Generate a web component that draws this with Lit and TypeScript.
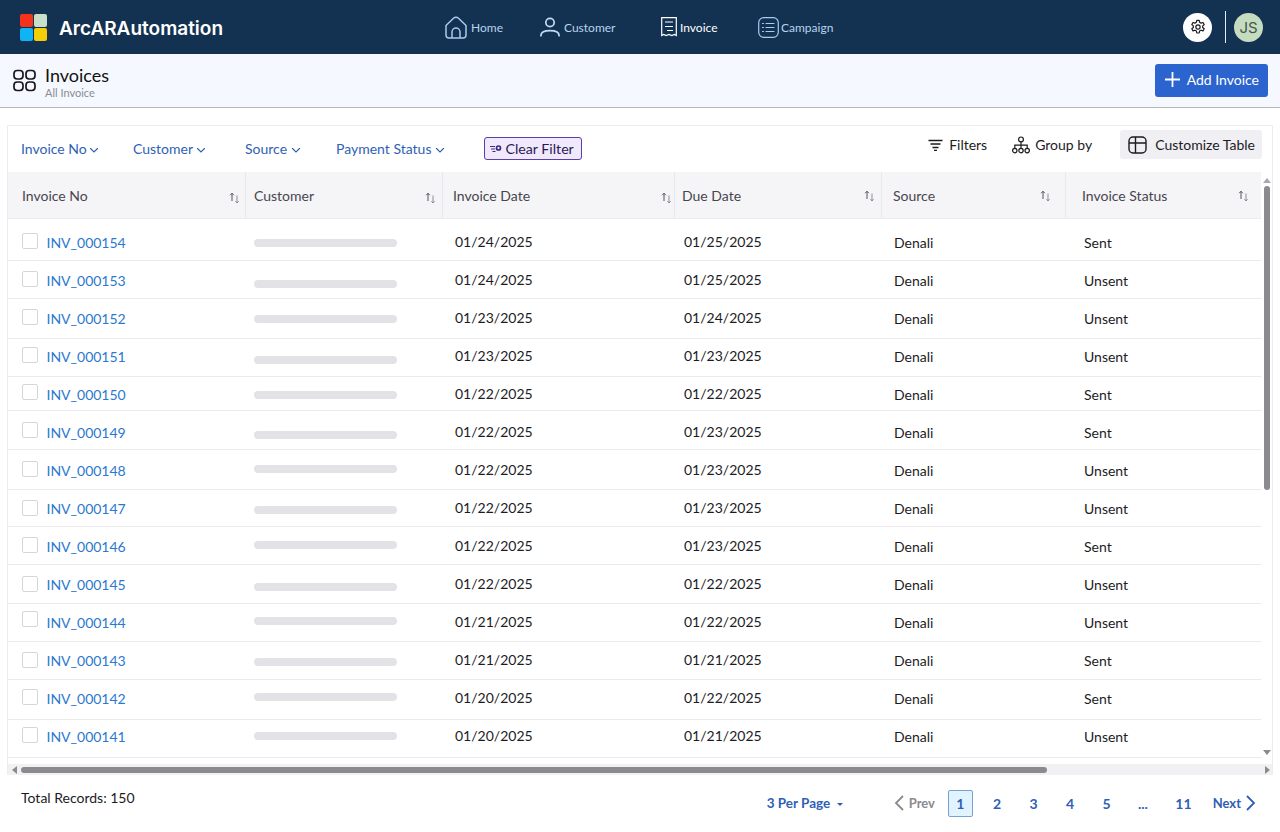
import { LitElement, css, html, svg } from 'lit';
import { customElement } from 'lit/decorators.js';

// invoice, invoice date, due date, status, customer bar offset, checkbox offset, y of the row's bottom rule
const rows = [
  ['INV_000154', '01/24/2025', '01/25/2025', 'Sent', 1, -1, 260],
  ['INV_000153', '01/24/2025', '01/25/2025', 'Unsent', 4, -1, 298],
  ['INV_000152', '01/23/2025', '01/24/2025', 'Unsent', 1, -1, 338],
  ['INV_000151', '01/23/2025', '01/23/2025', 'Unsent', 4, -1, 376],
  ['INV_000150', '01/22/2025', '01/22/2025', 'Sent', 1, -2, 410],
  ['INV_000149', '01/22/2025', '01/23/2025', 'Sent', 3, -2, 449],
  ['INV_000148', '01/22/2025', '01/23/2025', 'Unsent', -1, -1, 489],
  ['INV_000147', '01/22/2025', '01/23/2025', 'Unsent', 2, 0, 526],
  ['INV_000146', '01/22/2025', '01/23/2025', 'Sent', -1, -1, 564],
  ['INV_000145', '01/22/2025', '01/22/2025', 'Unsent', 3, 0, 603],
  ['INV_000144', '01/21/2025', '01/22/2025', 'Unsent', -1, -3, 641],
  ['INV_000143', '01/21/2025', '01/21/2025', 'Sent', 2, 0, 679],
  ['INV_000142', '01/20/2025', '01/22/2025', 'Sent', -1, -1, 719],
  ['INV_000141', '01/20/2025', '01/21/2025', 'Unsent', 0, -1, 757],
] as const;

const columns = ['Invoice No', 'Customer', 'Invoice Date', 'Due Date', 'Source', 'Invoice Status'];

const chevron = svg`<path d="M1.5 3.5 5 7l3.5-3.5" fill="none" stroke="currentColor" stroke-width="1.1" stroke-linecap="round"/>`;

@customElement('app-root')
export class AppRoot extends LitElement {
  static styles = css`
    :host {
      display: block;
      width: 1280px;
      height: 832px;
      overflow: hidden;
      background: #fff;
      font-family: Lato, 'Liberation Sans', sans-serif;
      color: #1c1b1f;
    }
    svg { display: block; flex: none; }

    .topbar {
      height: 54px;
      background: #133251;
      display: grid;
      grid-template-columns: 444px 1fr auto;
      align-items: center;
      padding-right: 17px;
    }
    .brand {
      display: flex;
      align-items: center;
      gap: 12px;
      padding-left: 20px;
      color: #fff;
      font-family: Inter, sans-serif;
      font-size: 19px;
      font-weight: 600;
    }
    .brand span { padding-top: 2px; }
    .logo { display: grid; grid-template-columns: 13px 13px; gap: 1px; }
    .logo i { height: 13px; border-radius: 2px; }
    .nav { display: flex; align-items: center; font-size: 12px; color: #b9d3ee; }
    .nav a { display: flex; align-items: center; }
    .nav a.home { width: 96px; gap: 3px; }
    .nav a.customer { width: 121px; gap: 4px; }
    .nav a.invoice { width: 97px; gap: 3px; color: #fff; }
    .nav a.campaign { gap: 2px; }
    .account { display: flex; align-items: center; }
    .gear {
      width: 29px; height: 29px; border-radius: 50%; background: #fff;
      display: flex; align-items: center; justify-content: center; color: #1c1b1f;
    }
    .divider { width: 1px; height: 32px; background: #e6edf5; margin: 0 8px 0 13px; }
    .avatar {
      width: 29px; height: 29px; border-radius: 50%; background: #c5dcc0;
      display: flex; align-items: center; justify-content: center;
      font-family: Inter, sans-serif; font-size: 15px; color: #44574a;
    }

    .pagehead {
      height: 54px;
      box-sizing: border-box;
      background: #f5f9ff;
      border-bottom: 1px solid #b5b7ba;
      display: flex;
      align-items: center;
      padding: 0 12px 0 13px;
      gap: 9px;
    }
    .titles { flex: 1; padding-top: 1px; }
    .titles h1 { margin: 0; font-size: 18px; font-weight: 400; line-height: 22px; color: #111; }
    .titles p { margin: 0; font-size: 11px; line-height: 13px; color: #8b8b90; }
    .add {
      display: flex; align-items: center; gap: 7px;
      height: 33px; box-sizing: border-box; padding: 0 9px 2px 10px;
      border: 0; border-radius: 3px; background: #2b63cf; color: #fff;
      font-family: inherit; font-size: 14px;
    }

    .card {
      margin: 17px 7px 0 7px;
      border: 1px solid #ededf0;
      border-bottom: 0;
    }
    .filters {
      height: 46px;
      display: flex;
      align-items: flex-start;
      background: #fff;
    }
    .filter {
      display: flex; align-items: center; gap: 2px;
      margin-top: 14px; font-size: 14px; line-height: 17px; color: #2f5fb5;
    }
    .filter svg { margin-top: 3px; }
    .clear {
      margin: 11px 0 0 39px;
      height: 23px; box-sizing: border-box;
      display: flex; align-items: center; gap: 3px;
      padding: 0 7px 0 5px;
      border: 1px solid #5c3ea8; border-radius: 3px;
      background: #efe9fb; color: #2a1a55; font-size: 14.2px;
    }
    .tools { margin-left: auto; display: flex; align-items: center; font-size: 14px; color: #1c1b1f; }
    .tool { display: flex; align-items: center; gap: 6px; margin-top: 4px; }
    .tool.group { margin-left: 25px; gap: 5px; }
    .tool.custom {
      margin-left: 28px; height: 29px; padding: 0 7px 0 8px; gap: 8px;
      background: #f0eff3; border-radius: 3px; margin-right: 10px;
    }

    .tablewrap { display: grid; grid-template-columns: 1fr 11px; height: 592px; }
    .table { overflow: hidden; }
    .row {
      display: grid;
      grid-template-columns: 238px 197px 232px 207px 184px 195px;
    }
    .head {
      height: 47px;
      background: #f5f4f7;
      border-bottom: 1px solid #eceaef;
      box-sizing: border-box;
      font-size: 14px;
      color: #47464f;
    }
    .head > div {
      display: flex;
      align-items: center;
      justify-content: space-between;
      border-right: 1px solid #e8e7ec;
      padding: 0 5px 0 8px;
    }
    .head > div:first-child { padding-left: 14px; }
    .head > div:nth-child(2) { padding-right: 6px; }
    .head > div:nth-child(3) { padding: 0 2px 0 10px; }
    .head > div:nth-child(4) { padding: 0 6px 0 7px; }
    .head > div:nth-child(5) { padding: 0 14px 0 11px; }
    .head > div:last-child { border-right: 0; padding: 0 12px 0 16px; }
    .head svg { margin-top: 6px; }
    .head > div:nth-child(n + 4) svg { margin-top: 2px; }
    .body { padding-top: 4px; }
    .item {
      box-sizing: border-box;
      border-bottom: 1px solid #ebe9eb;
      font-size: 14px;
      color: #1c1b1f;
    }
    .item > div {
      display: flex;
      align-items: center;
      height: 37px;
      box-sizing: border-box;
      margin-top: var(--shift);
      padding-top: 1px;
    }
    .item > div:first-child { padding-left: 14px; gap: 8.5px; }
    .check {
      width: 14px; height: 14px; border: 1px solid #d6d6da; border-radius: 2px; background: #fff;
    }
    .inv { color: #2b78cf; }
    .bar {
      width: 143px; height: 8px; border-radius: 4px; background: #e3e2e6; margin-left: 8px;
    }
    .item > div.date { padding: 0 0 1px 12px; }
    .item > div.due { padding: 0 0 1px 9px; }
    .item > div.src { padding-left: 12px; }
    .item > div.status { padding-left: 18px; }

    .vscroll { background: #fff; display: flex; flex-direction: column; align-items: center; padding-left: 1px; }
    .vtrack { flex: 1; width: 100%; display: flex; justify-content: center; }
    .vthumb { width: 6px; height: 304px; margin-top: 3px; border-radius: 3px; background: #8b8a8e; }
    .arrow-up { width: 0; height: 0; margin-top: 6px; border: 4.5px solid transparent; border-top: 0; border-bottom: 5px solid #a9a8ad; }
    .arrow-down { width: 0; height: 0; margin-bottom: 9px; border: 4.5px solid transparent; border-bottom: 0; border-top: 5px solid #8b8a8e; }
    .hscroll {
      height: 11px; background: #f1f0f3; display: flex; align-items: center;
      padding: 0 2px 0 4px; gap: 4px;
    }
    .hthumb { width: 1026px; height: 6px; border-radius: 3px; background: #8b8a8e; }
    .arrow-left { width: 0; height: 0; border: 4.5px solid transparent; border-left: 0; border-right: 5px solid #8b8a8e; }
    .arrow-right { width: 0; height: 0; margin-left: auto; border: 4.5px solid transparent; border-right: 0; border-left: 5px solid #8b8a8e; }

    .footer {
      display: flex; align-items: center; height: 56px;
      padding: 0 24px 0 21px; font-size: 14px;
    }
    .total { flex: 1; margin-bottom: 11px; color: #1c1b1f; }
    .perpage {
      display: flex; align-items: center; gap: 6px; width: 127px;
      color: #2f5fb5; font-weight: 700; font-size: 13.5px;
    }
    .caret { width: 0; height: 0; border: 3px solid transparent; border-bottom: 0; border-top: 3.5px solid #2f5fb5; margin-top: 2px; margin-left: 1px; }
    .pager { display: flex; align-items: center; color: #2f5fb5; font-weight: 700; font-size: 13px; }
    .prev { display: flex; align-items: center; gap: 5px; color: #8a8a8f; width: 54px; }
    .pager span.n { width: 36.5px; text-align: center; font-size: 14px; }
    .pager span.last { margin-left: 4px; }
    .current {
      width: 25px; height: 27px; box-sizing: border-box; margin-right: 6px;
      display: flex; align-items: center; justify-content: center; font-size: 14px;
      background: #e1f3ff; border: 1px solid #79a0d6; border-radius: 2px;
    }
    .next { display: flex; align-items: center; gap: 5px; margin-left: 11px; }
  `;

  private sortIcon() {
    return html`<svg width="11" height="12" viewBox="0 0 11 12" fill="none" stroke-width="1">
      <path d="M3 9V1.5M1.2 3.2 3 1.2l1.8 2" stroke="#55545c"/>
      <path d="M8 3.5V11M6.4 9.2 8 11l1.6-1.8" stroke="#8e8d95"/>
    </svg>`;
  }

  render() {
    return html`
      <header class="topbar">
        <div class="brand">
          <div class="logo">
            <i style="background:#f5331d"></i><i style="background:#c8dfca"></i>
            <i style="background:#0fb4f5"></i><i style="background:#f3cd07"></i>
          </div>
          <span>ArcARAutomation</span>
        </div>
        <nav class="nav">
          <a class="home">
            <svg width="24" height="24" viewBox="0 0 24 24" fill="none" stroke="#a9c9ee" stroke-width="1.5">
              <path d="M2 10.5 9.5 3.2a3.5 3.5 0 0 1 5 0L22 10.5V20a3 3 0 0 1-3 3H5a3 3 0 0 1-3-3Z" stroke-linejoin="round"/>
              <path d="M8 23v-6a4 4 0 0 1 8 0v6"/>
            </svg>
            Home
          </a>
          <a class="customer">
            <svg width="20" height="20" viewBox="0 0 22 22" fill="none" stroke="#c2dbf5" stroke-width="1.9" stroke-linecap="round">
              <circle cx="11" cy="6" r="4.6"/>
              <path d="M1 20.5c0-3.4 4-5.5 10-5.5s10 2.1 10 5.5"/>
            </svg>
            Customer
          </a>
          <a class="invoice">
            <svg width="16" height="20" viewBox="0 0 16 20" fill="none" stroke="#fff" stroke-width="1.2">
              <path d="M.7.7h14.6v17.8l-2-1-2.4 1-2.9-1-2.9 1-2.4-1-2 1Z"/>
              <path d="M4 5h8M4 9.5h8M6 13.5h6"/>
            </svg>
            Invoice
          </a>
          <a class="campaign">
            <svg width="21" height="21" viewBox="0 0 21 21" fill="none" stroke="#a9c9ee" stroke-width="1.2" stroke-linecap="round">
              <rect x=".7" y=".7" width="19.6" height="19.6" rx="5"/>
              <path d="M4.5 6.5h1M8 6.5h8M4.5 10.5h1M8 10.5h8M4.5 14.5h1M8 14.5h8"/>
            </svg>
            Campaign
          </a>
        </nav>
        <div class="account">
          <div class="gear">
            <svg width="16" height="16" viewBox="0 0 24 24" fill="none" stroke="currentColor" stroke-width="1.8" stroke-linejoin="round">
              <circle cx="12" cy="12" r="3.2"/>
              <path d="M10.2 2h3.6l.6 3 2.2 1.2 2.9-1 1.8 3.1-2.3 2v2.4l2.3 2-1.8 3.1-2.9-1-2.2 1.2-.6 3h-3.6l-.6-3-2.2-1.2-2.9 1-1.8-3.1 2.3-2v-2.4l-2.3-2 1.8-3.1 2.9 1 2.2-1.2Z"/>
            </svg>
          </div>
          <div class="divider"></div>
          <div class="avatar">JS</div>
        </div>
      </header>

      <section class="pagehead">
        <svg width="23" height="23" viewBox="0 0 23 23" fill="none" stroke="#17171a" stroke-width="1.7">
          <rect x="1" y="1.5" width="9" height="8.5" rx="3.2"/>
          <rect x="13" y="1.5" width="9" height="8.5" rx="3.2"/>
          <rect x="1" y="13" width="9" height="8.5" rx="3.2"/>
          <rect x="13" y="13" width="9" height="8.5" rx="3.2"/>
        </svg>
        <div class="titles">
          <h1>Invoices</h1>
          <p>All Invoice</p>
        </div>
        <button class="add">
          <svg width="15" height="15" viewBox="0 0 15 15" stroke="#fff" stroke-width="1.8"><path d="M7.5 0v15M0 7.5h15"/></svg>
          Add Invoice
        </button>
      </section>

      <section class="card">
        <div class="filters">
          <div class="filter" style="margin-left:13px;width:112px">Invoice No<svg width="10" height="10" viewBox="0 0 10 10">${chevron}</svg></div>
          <div class="filter" style="width:112px;gap:3px">Customer<svg width="10" height="10" viewBox="0 0 10 10">${chevron}</svg></div>
          <div class="filter" style="width:91px;gap:4px">Source<svg width="10" height="10" viewBox="0 0 10 10">${chevron}</svg></div>
          <div class="filter" style="gap:4px">Payment Status<svg width="10" height="10" viewBox="0 0 10 10">${chevron}</svg></div>
          <div class="clear">
            <svg width="12" height="10" viewBox="0 0 12 10" fill="none" stroke="#3c2a80" stroke-width="1">
              <path d="M0 2.5h5M1 5h4M2.5 7.5h3"/><circle cx="8.5" cy="4" r="2" stroke-width="1.7"/>
            </svg>
            Clear Filter
          </div>
          <div class="tools">
            <div class="tool">
              <svg width="15" height="12" viewBox="0 0 15 12" stroke="#1c1b1f" stroke-width="1.4"><path d="M.5 1.5h14M2.5 5h10M4.5 8.5h6M6 11.5h3"/></svg>
              Filters
            </div>
            <div class="tool group">
              <svg width="18" height="18" viewBox="0 0 18 18" fill="none" stroke="#1c1b1f" stroke-width="1.2">
                <circle cx="9" cy="3.4" r="2.4"/><circle cx="2.8" cy="14.6" r="2.2"/><circle cx="9" cy="14.6" r="2.2"/><circle cx="15.2" cy="14.6" r="2.2"/>
                <path d="M9 5.8v6.6M2.8 12.4V9.2h12.4v3.2"/>
              </svg>
              Group by
            </div>
            <div class="tool custom">
              <svg width="19" height="18" viewBox="0 0 19 18" fill="none" stroke="#1c1b1f" stroke-width="1.4">
                <rect x="1" y="1" width="17" height="16" rx="4"/><path d="M1 7h17M7.5 1v16"/>
              </svg>
              Customize Table
            </div>
          </div>
        </div>

        <div class="tablewrap">
          <div class="table">
            <div class="row head">
              ${columns.map((c) => html`<div>${c}${this.sortIcon()}</div>`)}
            </div>
            <div class="body">
              ${rows.map((r, i) => {
                const prev = i ? rows[i - 1][6] : 222;
                const shift = 223 + 38 * i - (prev + 1);
                return html`
                  <div class="row item" style="height:${r[6] - prev}px;--shift:${shift}px">
                    <div>
                      <span class="check" style="transform:translateY(${r[5]}px)"></span>
                      <span class="inv">${r[0]}</span>
                    </div>
                    <div><span class="bar" style="transform:translateY(${r[4]}px)"></span></div>
                    <div class="date">${r[1]}</div>
                    <div class="due">${r[2]}</div>
                    <div class="src">Denali</div>
                    <div class="status">${r[3]}</div>
                  </div>
                `;
              })}
            </div>
          </div>
          <div class="vscroll">
            <div class="arrow-up"></div>
            <div class="vtrack"><div class="vthumb"></div></div>
            <div class="arrow-down"></div>
          </div>
        </div>
        <div class="hscroll">
          <div class="arrow-left"></div>
          <div class="hthumb"></div>
          <div class="arrow-right"></div>
        </div>
      </section>

      <footer class="footer">
        <div class="total">Total Records: 150</div>
        <div class="perpage">3 Per Page <span class="caret"></span></div>
        <div class="pager">
          <div class="prev">
            <svg width="10" height="16" viewBox="0 0 10 16" fill="none" stroke="#8a8a8f" stroke-width="1.8"><path d="M9 1 2 8l7 7"/></svg>
            Prev
          </div>
          <div class="current">1</div>
          <span class="n">2</span><span class="n">3</span><span class="n">4</span><span class="n">5</span>
          <span class="n">...</span><span class="n last">11</span>
          <div class="next">Next
            <svg width="10" height="16" viewBox="0 0 10 16" fill="none" stroke="#2f5fb5" stroke-width="1.8"><path d="m1 1 7 7-7 7"/></svg>
          </div>
        </div>
      </footer>
    `;
  }
}
